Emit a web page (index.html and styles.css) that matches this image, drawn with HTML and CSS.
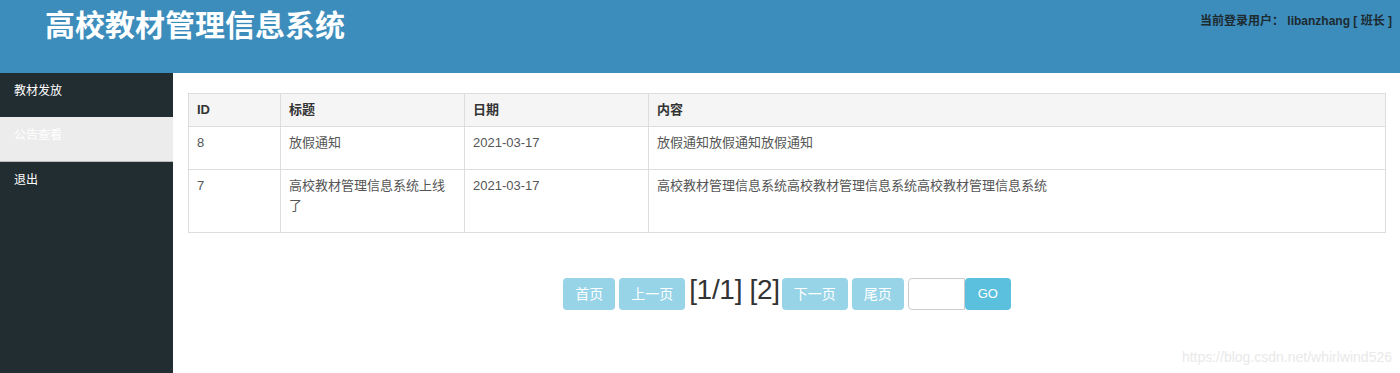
FILE: index.html
```html
<!DOCTYPE html>
<html lang="zh-CN">
<head>
<meta charset="utf-8">
<title>高校教材管理信息系统</title>
<link rel="stylesheet" href="styles.css">
</head>
<body>
<header class="header">
  <h1 class="title">高校教材管理信息系统</h1>
  <div class="user">当前登录用户： libanzhang [ 班长 ]</div>
</header>
<div class="layout">
  <nav class="sidebar">
    <a class="nav-item">教材发放</a>
    <a class="nav-item active">公告查看</a>
    <a class="nav-item">退出</a>
  </nav>
  <main class="main">
    <table class="table">
      <colgroup>
        <col class="c-id"><col class="c-title"><col class="c-date"><col>
      </colgroup>
      <thead>
        <tr><th>ID</th><th>标题</th><th>日期</th><th>内容</th></tr>
      </thead>
      <tbody>
        <tr><td>8</td><td>放假通知</td><td>2021-03-17</td><td>放假通知放假通知放假通知</td></tr>
        <tr><td>7</td><td>高校教材管理信息系统上线了</td><td>2021-03-17</td><td>高校教材管理信息系统高校教材管理信息系统高校教材管理信息系统</td></tr>
      </tbody>
    </table>
    <div class="pager">
      <span class="btn btn-off">首页</span>
      <span class="btn btn-off">上一页</span>
      <span class="pages">[1/1] [2]</span>
      <span class="btn btn-off">下一页</span>
      <span class="btn btn-off">尾页</span>
      <input class="page-input" type="text">
      <span class="btn btn-go">GO</span>
    </div>
  </main>
</div>
<div class="watermark">https://blog.csdn.net/whirlwind526</div>
</body>
</html>
```
FILE: styles.css
```css
* { box-sizing: border-box; }
body {
  margin: 0;
  font-family: "Liberation Sans", "Noto Sans CJK SC", sans-serif;
  font-size: 13px;
  color: #555;
  background: #fff;
  position: relative;
  height: 373px;
  overflow: hidden;
}
.header {
  height: 73px;
  background: #3c8dbc;
  display: flex;
  justify-content: space-between;
  align-items: flex-start;
  padding: 0 8px 0 45px;
}
.title {
  margin: 8px 0 0;
  font-size: 30px;
  line-height: 36px;
  font-weight: bold;
  color: #fff;
}
.user {
  margin-top: 13px;
  font-size: 12px;
  font-weight: bold;
  color: #1d2a30;
  line-height: 16px;
}
.layout {
  display: flex;
  height: 300px;
}
.sidebar {
  width: 173px;
  flex: none;
  background: #222d32;
  display: flex;
  flex-direction: column;
}
.nav-item {
  display: block;
  height: 44px;
  line-height: 20px;
  padding: 8px 14px;
  color: #fff;
  font-size: 12px;
}
.nav-item.active {
  background: #ececec;
  color: #fff;
  height: 45px;
  padding-top: 8px;
  border-bottom: 1px solid #bbb;
}
.main {
  flex: 1;
  padding: 20px 14px 0 15px;
}
.table {
  width: 100%;
  border-collapse: collapse;
  border: 1px solid #ddd;
}
.c-id { width: 92px; }
.c-title { width: 184px; }
.c-date { width: 184px; }
.table th, .table td {
  border: 1px solid #ddd;
  text-align: left;
  vertical-align: top;
  line-height: 20px;
}
.table th {
  background: #f5f5f5;
  color: #333;
  font-weight: bold;
  padding: 6px 8px;
}
.table td {
  padding: 6px 8px 16px;
}
.pager {
  margin-top: 45px;
  display: flex;
  justify-content: center;
  align-items: flex-start;
}
.btn {
  display: block;
  height: 32px;
  line-height: 32px;
  padding: 0 12px;
  border-radius: 4px;
  color: #fff;
  font-size: 14px;
}
.btn-off {
  background: #97d4e8;
  margin-right: 4px;
}
.btn-go {
  background: #5bc0de;
  width: 46px;
  text-align: center;
  padding: 0;
  font-size: 13px;
}
.pages {
  font-size: 28px;
  line-height: 30px;
  color: #333;
  margin: -3px 2px 0 0;
  letter-spacing: -0.3px;
}
.page-input {
  display: block;
  width: 57px;
  height: 32px;
  border: 1px solid #ccc;
  border-radius: 4px 0 0 4px;
  margin: 0;
  padding: 0;
}
.watermark {
  position: absolute;
  right: 8px;
  bottom: 8px;
  font-size: 14px;
  color: #e9e9e9;
}
```
